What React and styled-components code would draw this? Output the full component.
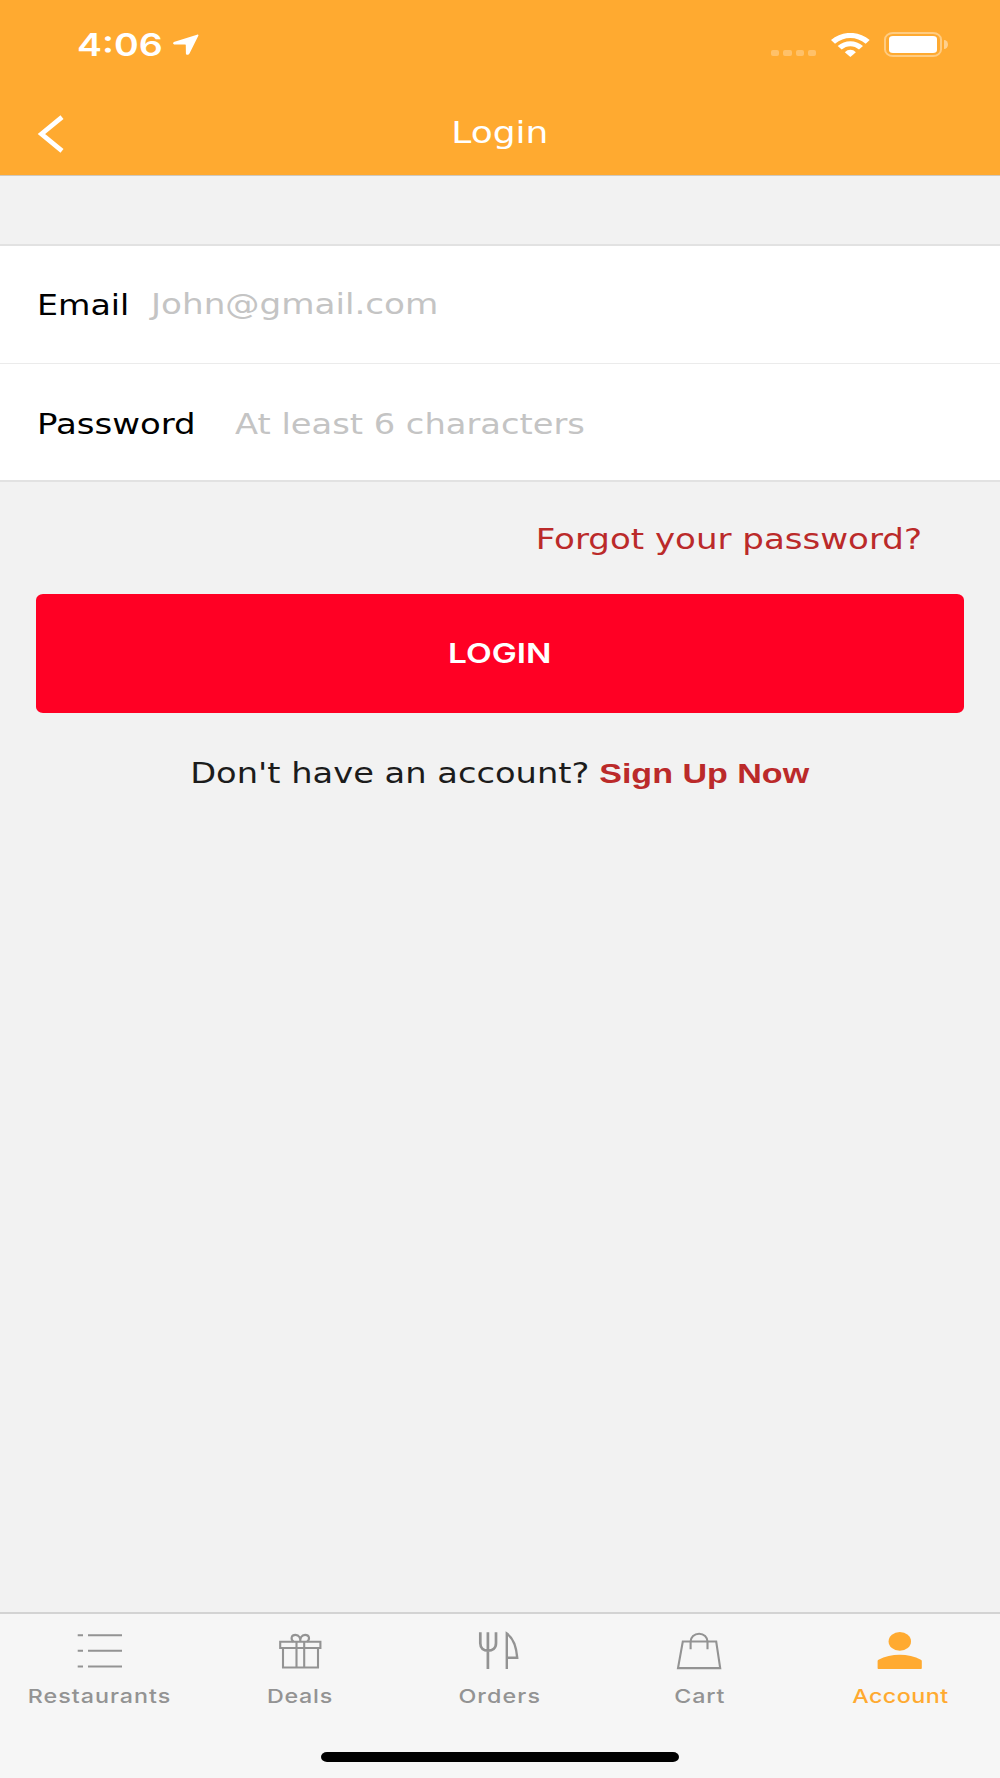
/**
 *
 * Login screen
 *
 */

import React from 'react';
import styled, { createGlobalStyle } from 'styled-components';

const GlobalStyle = createGlobalStyle`
  * {
    box-sizing: border-box;
  }

  body {
    margin: 0;
    background: #f2f2f2;
  }
`;

const Screen = styled.div`
  display: flex;
  flex-direction: column;
  width: 1000px;
  height: 1778px;
  overflow: hidden;
  background: #f2f2f2;
  color: #000;
  font-family: 'DejaVu Sans', Verdana, sans-serif;
  font-size: 27.5px;
  line-height: 34px;
`;

// wide lettering used all over the app
const Wide = styled.span`
  display: inline-block;
  white-space: pre;
  transform: scaleX(${props => props.$scale || 1.225});
  transform-origin: ${props => props.$origin || 'center'};
`;

const Header = styled.header`
  height: 176px;
  background: #ffaa30;
  border-bottom: 1px solid #cfc8bd;
  color: #fff;
`;

const StatusBar = styled.div`
  display: flex;
  align-items: center;
  justify-content: space-between;
  height: 89px;
  padding: 0 52px 0 77px;
`;

const StatusGroup = styled.div`
  display: flex;
  align-items: center;
`;

const Time = styled.div`
  width: 96px;
  padding-top: 1px;
  font: 600 31px/36px Inter, sans-serif;
`;

const SignalDots = styled.div`
  display: flex;
  gap: 4px;
  margin: 17px 14.5px 0 0;
`;

const Dot = styled.i`
  width: 8.2px;
  height: 6.6px;
  border-radius: 2px;
  background: rgba(255, 255, 255, 0.28);
`;

const Battery = styled.div`
  width: 58px;
  height: 25px;
  margin-left: 14.5px;
  padding: 2px 3px;
  border: 2px solid rgba(255, 255, 255, 0.4);
  border-radius: 9px / 7.5px;
`;

const BatteryLevel = styled.div`
  height: 100%;
  border-radius: 4px / 3px;
  background: #fff;
`;

const BatteryTip = styled.div`
  width: 4px;
  height: 9px;
  margin-left: 2px;
  border-radius: 0 4px 4px 0 / 0 4.5px 4.5px 0;
  background: rgba(255, 255, 255, 0.45);
`;

const TitleBar = styled.div`
  display: grid;
  grid-template-columns: 100px 1fr 100px;
  align-items: center;
  height: 87px;
`;

const BackButton = styled.button`
  display: flex;
  width: 40px;
  margin: 3px 0 0 32px;
  padding: 0;
  border: 0;
  background: none;
  color: inherit;
`;

const Title = styled.h1`
  margin: 0;
  font-size: 29.5px;
  font-weight: 400;
  text-align: center;
`;

const Fields = styled.div`
  margin-top: 68px;
  border-top: 2px solid #e2e2e2;
  border-bottom: 2px solid #e2e2e2;
  background: #fff;
`;

const FieldRow = styled.div`
  display: flex;
  align-items: center;
  height: 117px;
  padding: ${props => props.$padTop || 0}px 36px 0 36.7px;

  & + & {
    border-top: 1px solid #ebebeb;
  }
`;

const Label = styled.label`
  flex: none;
  width: ${props => props.$width}px;
`;

const Placeholder = styled.div`
  padding-bottom: ${props => props.$lift || 0}px;
  color: #c4c4c4;
`;

const ForgotLink = styled.a`
  margin: 40px 78px 0 0;
  color: #bb2a2a;
  text-align: right;
`;

const LoginButton = styled.button`
  height: 119px;
  margin: 37.5px 36px 0;
  padding: 1px 0 0;
  border: 0;
  border-radius: 7px / 6px;
  background: #ff0024;
  color: #fff;
  font: 600 27px/34px Inter, sans-serif;
`;

const SignUp = styled.p`
  margin: 43.5px 0 0;
  color: #1c1c1c;
  text-align: center;
`;

const SignUpLink = styled.a`
  margin-left: 8px;
  color: #bb2a2a;
  font-family: 'Liberation Sans', Arial, sans-serif;
  font-size: 27.8px;
  font-weight: 700;
`;

const Footer = styled.footer`
  margin-top: auto;
  height: 166px;
  border-top: 2px solid #d3d3d3;
  background: #f6f6f6;
`;

const Tabs = styled.nav`
  display: grid;
  grid-template-columns: repeat(5, 1fr);
  height: 138px;
`;

const TabItem = styled.a`
  display: flex;
  flex-direction: column;
  align-items: center;
  padding-top: 17px;
  color: ${props => (props.$active ? '#ffaa30' : '#939393')};
  font: 500 19px/26px Inter, sans-serif;
  letter-spacing: ${props => props.$spacing}px;
`;

const TabLabel = styled(Wide)`
  margin-top: 13px;
`;

const TabIcon = styled.svg`
  width: 48px;
  height: 40px;
  fill: none;
  stroke: currentColor;
  stroke-width: ${props => props.$stroke || 2.1};
`;

const HomeIndicator = styled.div`
  width: 358px;
  height: 10px;
  margin: 0 auto;
  border-radius: 6px / 5px;
  background: #000;
`;

const ListIcon = () => (
  <TabIcon viewBox="0 0 48 40">
    <path d="M1.7 4.2h5.3M12 4.2h34M1.7 19.8h5.3M12 19.8h34M1.7 35.5h5.3M12 35.5h34" />
  </TabIcon>
);

const GiftIcon = () => (
  <TabIcon viewBox="0 0 48 40">
    <path d="M4.2 10.8h40.2v6.2H4.2zM7 17h35v19.5H7zM20.5 10.8v25.7M28.2 10.8v25.7" />
    <path d="M17.5 10.8C14.3 8 15.2 3.9 19.5 3.9c3.8 0 5 3.2 4.8 6.9-.2-3.7 1-6.9 4.8-6.9 4.3 0 5.2 4.1 2 6.9" />
  </TabIcon>
);

const CutleryIcon = () => (
  <TabIcon viewBox="0 0 48 40" $stroke={2.7}>
    <path d="M4.3 1.3v11c0 5 3.400 7.400 7.700 7.400s8-2.400 8-7.400v-11M11.900 1.300v36.700" />
    <path d="M30.800 38V2.500c5.600 4 9.600 13.500 10.400 24.200H30.800" strokeWidth="2.4" />
  </TabIcon>
);

const BagIcon = () => (
  <TabIcon viewBox="0 0 48 40">
    <path d="M6.800 10.500h33.400l4 26.600H2z" />
    <path d="M14.600 18.200v-7.400c0-4.700 3.700-8.100 8.500-8.100s8.400 3.400 8.400 8.100v7.400" />
  </TabIcon>
);

const PersonIcon = () => (
  <TabIcon viewBox="0 0 48 40">
    <g fill="currentColor" stroke="none">
      <ellipse cx="23.8" cy="10.4" rx="11.2" ry="9.4" />
      <path d="M1.6 30.2c0-.7.3-1.1.9-1.4 12.5-6.600 30-6.600 42.400 0 .6.3.9.7.9 1.400v6.700c0 .8-.4 1.100-1.100 1.100H2.700c-.7 0-1.100-.3-1.100-1.100z" />
    </g>
  </TabIcon>
);

const tabs = [
  { label: 'Restaurants', icon: ListIcon, spacing: 0.8 },
  { label: 'Deals', icon: GiftIcon, spacing: 0.6 },
  { label: 'Orders', icon: CutleryIcon, spacing: 0.9 },
  { label: 'Cart', icon: BagIcon, spacing: 0.7 },
  { label: 'Account', icon: PersonIcon, spacing: 0.4, active: true },
];

const App = () => (
  <Screen>
    <GlobalStyle />
    <Header>
      <StatusBar>
        <StatusGroup>
          <Time>
            <Wide $scale={1.21} $origin="left">4:06</Wide>
          </Time>
          <svg width="26" height="22" viewBox="0 0 26 22">
            <path
              d="M24 .7c1.1-.4 1.9.2 1.2 1.4l-8.7 17.3c-1 2-3.6 1.8-3.6-.2l-.1-7.8c0-.6-.2-.8-.9-.8l-10-.1C-.3 10.4-.6 8.5 1.6 7.7z"
              fill="#fff"
            />
          </svg>
        </StatusGroup>
        <StatusGroup>
          <SignalDots>
            <Dot />
            <Dot />
            <Dot />
            <Dot />
          </SignalDots>
          <svg width="39" height="24" viewBox="0 0 39 24" fill="#fff">
            <path d="M0 7C11-2.5 27.7-2.5 38.7 7L34.7 10.7C25.5 3 13.2 3 4 10.7Z" />
            <path d="M6.7 13C14 6.6 24.7 6.6 32 13L28 16.5C23 12 15.7 12 10.7 16.5Z" />
            <path d="M13.8 19.3C17 16 21.7 16 24.9 19.3L19.35 24Z" />
          </svg>
          <Battery>
            <BatteryLevel />
          </Battery>
          <BatteryTip />
        </StatusGroup>
      </StatusBar>
      <TitleBar>
        <BackButton aria-label="Back">
          <svg width="40" height="40" viewBox="0 0 40 40" fill="none">
            <path d="M30 3.2L9.500 20l20.500 16.800" stroke="#fff" strokeWidth="4.8" />
          </svg>
        </BackButton>
        <Title>
          <Wide $scale={1.22}>Login</Wide>
        </Title>
      </TitleBar>
    </Header>

    <Fields>
      <FieldRow>
        <Label $width={114}>
          <Wide $scale={1.21} $origin="left">Email</Wide>
        </Label>
        <Placeholder $lift={2}>
          <Wide $scale={1.243} $origin="left">John@gmail.com</Wide>
        </Placeholder>
      </FieldRow>
      <FieldRow $padTop={4}>
        <Label $width={198}>
          <Wide $scale={1.235} $origin="left">Password</Wide>
        </Label>
        <Placeholder>
          <Wide $scale={1.226} $origin="left">At least 6 characters</Wide>
        </Placeholder>
      </FieldRow>
    </Fields>

    <ForgotLink>
      <Wide $scale={1.238} $origin="right">Forgot your password?</Wide>
    </ForgotLink>
    <LoginButton>
      <Wide $scale={1.24}>LOGIN</Wide>
    </LoginButton>
    <SignUp>
      <Wide>
        Don't have an account?
        <SignUpLink>Sign Up Now</SignUpLink>
      </Wide>
    </SignUp>

    <Footer>
      <Tabs>
        {tabs.map(({ label, icon: Icon, spacing, active }) => (
          <TabItem key={label} $active={active} $spacing={spacing}>
            <Icon />
            <TabLabel>{label}</TabLabel>
          </TabItem>
        ))}
      </Tabs>
      <HomeIndicator />
    </Footer>
  </Screen>
);

export default App;
